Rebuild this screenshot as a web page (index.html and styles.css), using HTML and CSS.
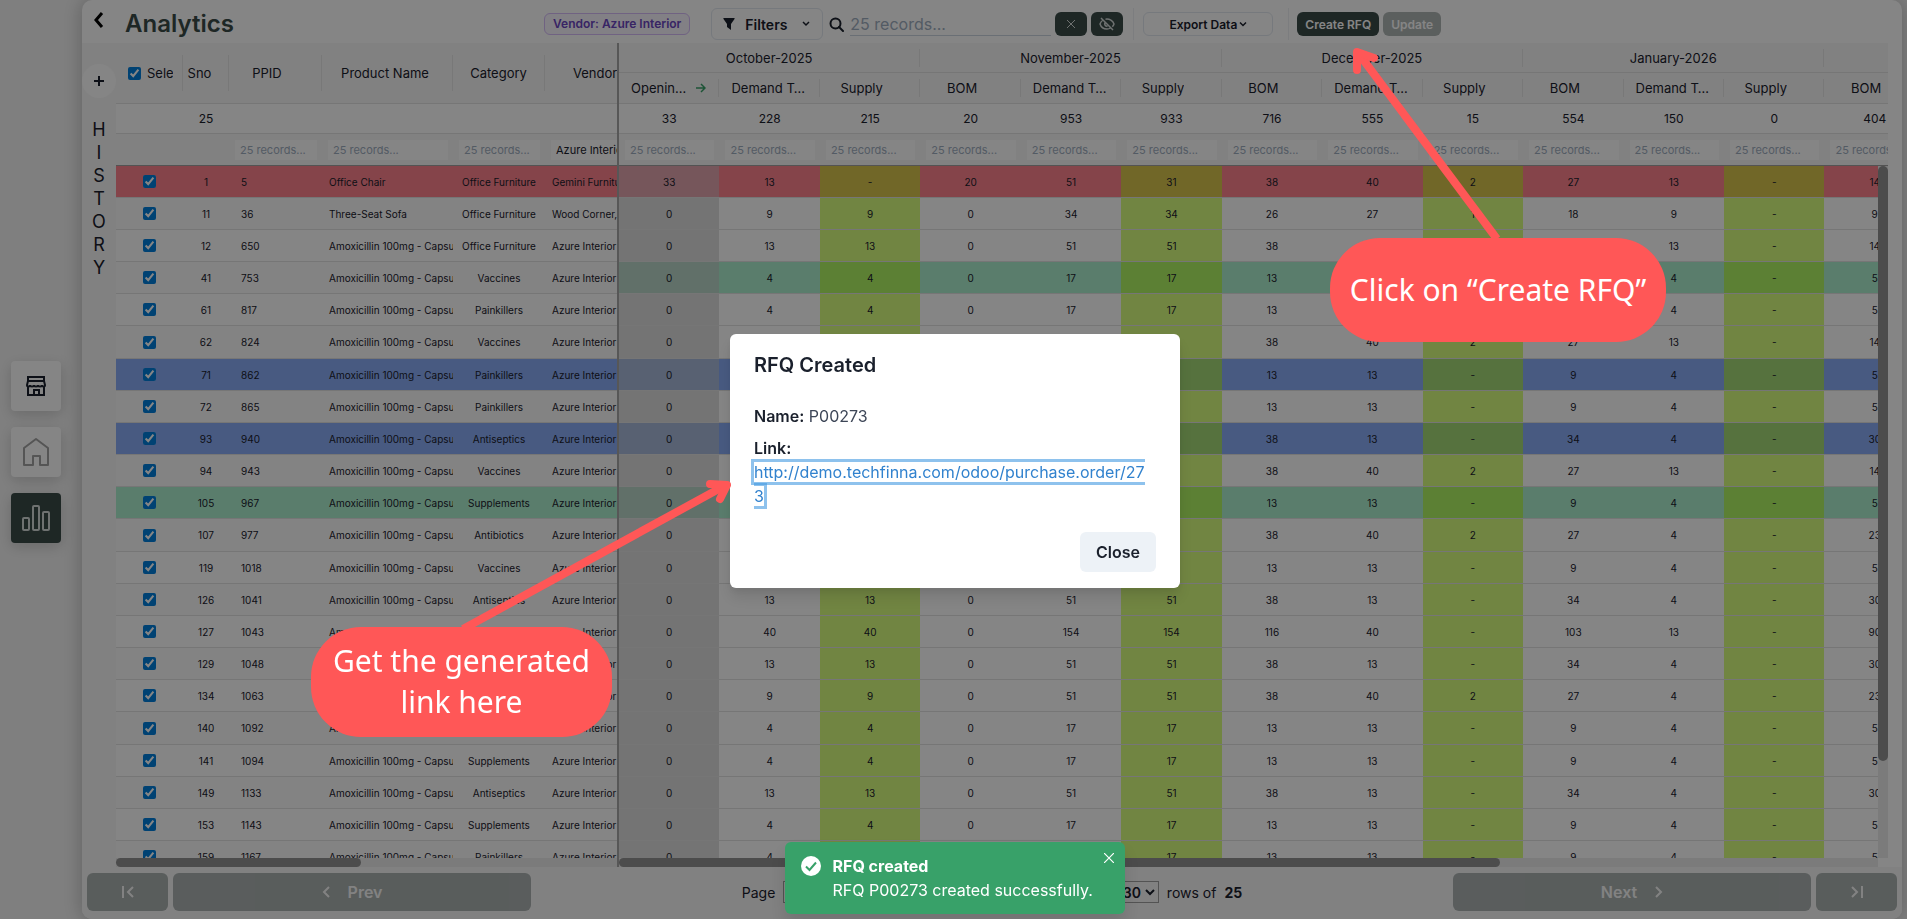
FILE: index.html
```html
<!DOCTYPE html>
<html lang="en">
  <head>
    <meta charset="utf-8" />
    <title>Analytics</title>
    <link rel="stylesheet" href="styles.css">
    <script type="text/javascript" src="main.js" defer></script>
  </head>
  <body>
    <div class="app">
      <nav class="sidebar">
        <a class="tile" href="#store" aria-label="Store">
          <svg width="24" height="24" viewBox="0 0 24 24" fill="none" stroke="#1a202c" stroke-width="2">
            <path d="M4 3h16v4H4zM4 7l-1 4c0 2 3 2 3 0 0 2 4 2 4 0 0 2 4 2 4 0 0 2 4 2 4 0 0 2 3 2 3 0l-1-4M4 12v9h16v-9M10 21v-5h5v5" />
          </svg>
        </a>
        <a class="tile" href="#home" aria-label="Home">
          <svg width="28" height="32" viewBox="0 0 28 32" fill="none" stroke="#a3a3a3" stroke-width="2">
            <path d="M2 12 14 3l12 9v17h-8v-9h-7v9H2z" stroke-linejoin="round" />
          </svg>
        </a>
        <a class="tile active" href="#analytics" aria-label="Analytics">
          <svg width="30" height="30" viewBox="0 0 30 30" fill="none" stroke="#d5dad9" stroke-width="2">
            <rect x="2" y="15" width="6" height="12" rx="1" />
            <rect x="12" y="3" width="6" height="24" rx="1" />
            <rect x="22" y="9" width="6" height="18" rx="1" />
          </svg>
        </a>
      </nav>

      <main class="card">
        <header class="topbar">
          <button class="back" aria-label="Back">
            <svg width="12" height="16" viewBox="0 0 12 16" fill="none" stroke="#000" stroke-width="3">
              <path d="M9 1 3 8l6 7" />
            </svg>
          </button>
          <h1>Analytics</h1>
          <span class="tag">Vendor: Azure Interior</span>
          <button class="filters">
            <svg width="12" height="14" viewBox="0 0 12 14" fill="#1a202c">
              <path d="M1 1h10c.6 0 .8.6.5 1L8 7v6L4 10V7L.5 2C.2 1.6.4 1 1 1z" />
            </svg>
            Filters
            <svg width="10" height="10" viewBox="0 0 10 10" fill="none" stroke="#1a202c" stroke-width="1.5">
              <path d="M2 3l3 3 3-3" />
            </svg>
          </button>
          <label class="search">
            <svg width="15" height="15" viewBox="0 0 15 15" fill="none" stroke="#1a202c" stroke-width="2">
              <circle cx="6.5" cy="6.5" r="5" />
              <path d="M10 10l4 4" stroke-linecap="round" />
            </svg>
            <input type="text" placeholder="25 records..." aria-label="Search records" />
          </label>
          <div class="icon-buttons">
            <button class="dark icon" aria-label="Clear search">
              <svg width="10" height="10" viewBox="0 0 10 10" stroke="#d5dad9">
                <path d="M1 1l8 8M9 1L1 9" />
              </svg>
            </button>
            <button class="dark icon" aria-label="Hide columns">
              <svg width="16" height="14" viewBox="0 0 16 14" fill="none" stroke="#d5dad9" stroke-width="1.5">
                <path d="M2 1l12 12M4 3C2.5 4 1.5 5.5 1 7c1 3 4 5 7 5 1.3 0 2.5-.3 3.5-1M6.5 2.2C10.5 1.5 14 4 15 7c-.3 1-.9 2-1.7 2.7M6 5.5c-1 2 .5 4 2.5 3.8" />
              </svg>
            </button>
          </div>
          <div class="export">
            <button class="outline">
              Export Data
              <svg width="8" height="8" viewBox="0 0 8 8" fill="none" stroke="#1a202c" stroke-width="1.5">
                <path d="M1 2.5l3 3 3-3" />
              </svg>
            </button>
          </div>
          <div class="actions">
            <button class="dark">Create RFQ</button>
            <button class="dark" disabled>Update</button>
          </div>
        </header>

        <div class="content">
          <div class="history">
            <button class="add" aria-label="Add">
              <svg width="12" height="12" viewBox="0 0 12 12" stroke="#1a202c" stroke-width="2">
                <path d="M6 1v10M1 6h10" />
              </svg>
            </button>
            <div class="letters">
              <span>H</span><span>I</span><span>S</span><span>T</span><span>O</span><span>R</span><span>Y</span>
            </div>
          </div>

          <div class="pane pinned">
            <div class="clip">
              <table>
                <colgroup>
                  <col class="c-check" /><col class="c-sno" /><col class="c-ppid" />
                  <col class="c-name" /><col class="c-cat" /><col class="c-vendor" />
                </colgroup>
                <thead>
                  <tr class="titles">
                    <th>
                      <div class="label tall left">
                        <input type="checkbox" id="all" checked />
                        <label for="all">Select</label>
                      </div>
                    </th>
                    <th><div class="label tall sno">Sno</div></th>
                    <th><div class="label tall near">PPID</div></th>
                    <th><div class="label tall name">Product Name</div></th>
                    <th><div class="label tall">Category</div></th>
                    <th><div class="label tall">Vendor</div></th>
                  </tr>
                  <tr class="totals">
                    <td></td><td>25</td><td></td><td></td><td></td><td></td>
                  </tr>
                  <tr class="search-row">
                    <td></td>
                    <td></td>
                    <td><input type="text" placeholder="25 records..." aria-label="Filter PPID" /></td>
                    <td><input type="text" placeholder="25 records..." aria-label="Filter product name" /></td>
                    <td><input type="text" placeholder="25 records..." aria-label="Filter category" /></td>
                    <td><input type="text" value="Azure Interior" aria-label="Filter vendor" /></td>
                  </tr>
                </thead>
                <tbody id="products"></tbody>
              </table>
            </div>
            <div class="hscroll"><div class="thumb half"></div></div>
          </div>

          <div class="pane months">
            <div class="clip">
              <table>
                <thead>
                  <tr class="groups">
                    <th colspan="3"><div class="label">October-2025</div></th>
                    <th colspan="3"><div class="label">November-2025</div></th>
                    <th colspan="3"><div class="label">December-2025</div></th>
                    <th colspan="3"><div class="label">January-2026</div></th>
                    <th></th>
                  </tr>
                  <tr class="columns" id="columns"></tr>
                  <tr class="totals" id="totals"></tr>
                  <tr class="search-row" id="searches"></tr>
                </thead>
                <tbody id="figures"></tbody>
              </table>
              <div class="vscroll"><div class="thumb"></div></div>
            </div>
            <div class="hscroll"><div class="thumb most"></div></div>
          </div>
        </div>

        <footer class="pager">
          <button class="page-end" disabled aria-label="First page">
            <svg width="14" height="14" viewBox="0 0 14 14" fill="none" stroke="#fff" stroke-width="2">
              <path d="M2 1v12M12 2L7 7l5 5" />
            </svg>
          </button>
          <button class="page-step" disabled>
            <svg width="8" height="14" viewBox="0 0 8 14" fill="none" stroke="#fff" stroke-width="2">
              <path d="M7 2L2 7l5 5" />
            </svg>
            Prev
          </button>
          <div class="page-info">
            <label for="page">Page</label>
            <input type="text" id="page" value="1" />
            <span>of</span>
            <b>1</b>
            <label for="size">Show</label>
            <select id="size">
              <option>30</option>
            </select>
            <span>rows of</span>
            <b>25</b>
          </div>
          <button class="page-step" disabled>
            Next
            <svg width="8" height="14" viewBox="0 0 8 14" fill="none" stroke="#fff" stroke-width="2">
              <path d="M1 2l5 5-5 5" />
            </svg>
          </button>
          <button class="page-end" disabled aria-label="Last page">
            <svg width="14" height="14" viewBox="0 0 14 14" fill="none" stroke="#fff" stroke-width="2">
              <path d="M12 1v12M2 2l5 5-5 5" />
            </svg>
          </button>
        </footer>
      </main>
    </div>

    <div class="overlay">
      <section class="modal" role="dialog" aria-labelledby="modal-title">
        <h2 id="modal-title">RFQ Created</h2>
        <div class="modal-body">
          <p><b>Name:</b> <span>P00273</span></p>
          <p><b>Link:</b><br /><a href="http://demo.techfinna.com/odoo/purchase.order/273">http://demo.techfinna.com/odoo/purchase.order/273</a></p>
        </div>
        <div class="modal-footer">
          <button>Close</button>
        </div>
      </section>
    </div>

    <div class="toast" role="status">
      <svg width="20" height="20" viewBox="0 0 20 20">
        <circle cx="10" cy="10" r="10" fill="#fff" />
        <path d="M5 10.5l3.5 3.5L15 6.5" fill="none" stroke="#38a169" stroke-width="2" />
      </svg>
      <div>
        <b>RFQ created</b>
        <p>RFQ P00273 created successfully.</p>
      </div>
      <button aria-label="Dismiss">
        <svg width="10" height="10" viewBox="0 0 10 10" stroke="#fff" stroke-width="1.2">
          <path d="M0 0l10 10M10 0L0 10" />
        </svg>
      </button>
    </div>

    <svg class="arrows" fill="none" stroke="#ff5757" stroke-width="8">
      <path d="M1497 239L1359 54" />
      <path d="M1357 70V52l17 6" stroke-linecap="round" stroke-linejoin="round" />
      <path d="M463 629L726 485" />
      <path d="M710 484l17 1-7 14" stroke-linecap="round" stroke-linejoin="round" />
    </svg>
    <div class="callout create">Click on “Create RFQ”</div>
    <div class="callout link">Get the generated link here</div>
  </body>
</html>
```
FILE: styles.css
```css
* {
  box-sizing: border-box;
}
body {
  margin: 0;
  font-family: Inter, "Liberation Sans", sans-serif;
  font-size: 14px;
  color: #1a202c;
  background: #f4f4f4;
  overflow: hidden;
}
button,
input,
select {
  font: inherit;
  color: inherit;
}
button {
  display: flex;
  align-items: center;
  justify-content: center;
  border: 0;
  background: none;
  padding: 0;
}
h1,
h2,
p {
  margin: 0;
}

.app {
  display: flex;
  height: 100vh;
}

/* left navigation */
.sidebar {
  width: 82px;
  flex: none;
  display: flex;
  flex-direction: column;
  justify-content: center;
  gap: 16px;
  padding: 0 0 16px 11px;
}
.tile {
  display: flex;
  align-items: center;
  justify-content: center;
  width: 50px;
  height: 50px;
  border-radius: 4px;
  background: #fff;
  box-shadow: 0 4px 14px rgba(0, 0, 0, 0.16);
}
.tile.active {
  background: #3a4b48;
}

.card {
  flex: 1;
  min-width: 0;
  margin-right: 5px;
  display: flex;
  flex-direction: column;
  background: #fff;
  border-radius: 10px;
  box-shadow: 0 0 20px rgba(0, 0, 0, 0.25);
}

/* top bar */
.topbar {
  display: flex;
  align-items: center;
  height: 43px;
  padding-top: 5px;
}
.back {
  width: 12px;
  margin: 0 20px 8px 11px;
}
h1 {
  width: 419px;
  font-size: 24px;
  font-weight: 600;
  line-height: 32px;
  color: #3a4b48;
}
.tag {
  padding: 0 8px;
  margin-right: 21px;
  line-height: 20px;
  font-size: 12px;
  font-weight: 600;
  color: #6b46c1;
  background: #faf5ff;
  border: 1px solid #d6bcfa;
  border-radius: 6px;
  white-space: nowrap;
}
.filters {
  width: 112px;
  height: 32px;
  gap: 10px;
  font-weight: 600;
  border: 1px solid #e2e8f0;
  border-radius: 6px;
}
.filters svg:last-child {
  margin-left: 4px;
}
.search {
  display: flex;
  align-items: center;
  gap: 6px;
  margin-left: 6px;
}
.search input {
  width: 201px;
  height: 24px;
  padding: 0;
  font-size: 16px;
  border: 0;
  border-bottom: 1px solid #cbd5e0;
  background: none;
}
.search input::placeholder {
  color: #a0aec0;
}
.icon-buttons,
.actions {
  display: flex;
  gap: 4px;
}
.icon-buttons {
  margin: 0 10px 0 4px;
}
.dark {
  height: 24px;
  padding: 0 8px;
  font-size: 12px;
  font-weight: 600;
  color: #fff;
  background: #3a4b48;
  border-radius: 6px;
  white-space: nowrap;
}
.dark:disabled {
  opacity: 0.4;
}
.icon {
  width: 32px;
}
.export,
.actions {
  height: 32px;
  align-items: center;
  border-left: 1px solid #edf0f3;
}
.export {
  display: flex;
  padding: 0 15px 0 9px;
}
.actions {
  padding-left: 8px;
}
.outline {
  width: 130px;
  height: 24px;
  gap: 2px;
  font-size: 12px;
  font-weight: 600;
  border: 1px solid #e2e8f0;
  border-radius: 6px;
}

/* grid */
.content {
  flex: 1;
  min-height: 0;
  display: flex;
  padding-right: 14px;
}
.history {
  width: 34px;
  flex: none;
  padding-top: 21px;
  background: #f8f8f8;
}
.add {
  width: 34px;
  height: 34px;
  border-radius: 50%;
  background: #fff;
}
.letters {
  display: flex;
  flex-direction: column;
  align-items: center;
  padding-top: 20px;
  font-size: 18px;
  line-height: 23px;
}
.pane {
  display: flex;
  flex-direction: column;
  min-width: 0;
}
.pinned {
  width: 503px;
  flex: none;
  border-right: 2px solid #a8a8a8;
}
.months {
  flex: 1;
}
.clip {
  flex: 1;
  min-height: 0;
  overflow: hidden;
  position: relative;
}
table {
  table-layout: fixed;
  border-spacing: 0;
  font-size: 10px;
}
.pinned table {
  width: 530px;
}
.months table {
  width: 1306px;
}
.c-check {
  width: 67px;
}
.c-sno {
  width: 46px;
}
.c-ppid {
  width: 93px;
}
.c-name {
  width: 131px;
}
.c-cat {
  width: 92px;
}
th,
td {
  padding: 0;
  text-align: center;
  overflow: hidden;
  white-space: nowrap;
}
th {
  font-size: 13px;
  font-weight: 400;
  background: #f8f8f8;
  border-bottom: 1px solid #e2e2e2;
}
.titles {
  height: 61px;
}
.groups {
  height: 30px;
}
.columns {
  height: 31px;
}
.label {
  display: flex;
  align-items: center;
  justify-content: center;
  height: 18px;
  padding: 0 12px;
  border-right: 1px solid #e6e6e6;
}
.label span {
  overflow: hidden;
  text-overflow: ellipsis;
}
.tall {
  height: 36px;
}
.left {
  gap: 6px;
  justify-content: flex-start;
  padding-right: 9px;
}
.left input {
  flex: none;
  width: 13px;
  height: 13px;
  margin: 0;
}
.left label {
  overflow: hidden;
}
.near {
  padding: 0 16px 0 0;
}
.sno {
  padding: 0 12px 0 0;
}
.name {
  padding: 0 16px 0 12px;
}
.arrow {
  flex: none;
  margin-left: 8px;
}
.totals td {
  height: 30px;
  font-size: 12px;
  border-bottom: 1px solid #e2e2e2;
}
.search-row td {
  height: 32px;
  padding: 0 5px 0 6px;
  background: #f8f8f8;
  border-bottom: 1px solid #a0a0a0;
}
.search-row input {
  display: block;
  width: 100%;
  height: 20px;
  padding: 0 5px;
  font-size: 11px;
  background: #fff;
  border: 0;
}
.search-row input::placeholder {
  color: #a0aec0;
}
tbody tr {
  height: 32px;
}
tbody tr:nth-child(6n) {
  height: 33px;
}
tbody td {
  border-bottom: 1px solid #e2e2e2;
}
tbody input {
  display: block;
  width: 13px;
  height: 13px;
  margin: 0 auto;
}
input[type="checkbox"] {
  accent-color: #007fdd;
}
.start {
  text-align: left;
  padding-left: 12px;
}
.start + .start,
.vendor {
  text-align: left;
  padding-left: 7px;
}
#products tr:nth-child(even) {
  background: #fcfcfc;
}
#figures td:first-child {
  background: #dfdfdf;
}
#figures td:nth-child(3n) {
  background: #d9ff7f;
}
#products .red,
.red {
  background: #ff838e;
}
#figures .red td:first-child {
  background: #e3a5af;
}
#figures .red td:nth-child(3n) {
  background: #d9c64d;
}
#products .green,
.green {
  background: #adf0d0;
}
#figures .green td:first-child {
  background: #bbd7ca;
}
#figures .green td:nth-child(3n) {
  background: #b1f664;
}
#products .blue,
.blue {
  background: #8aadf8;
}
#figures .blue td:first-child {
  background: #a9bbdb;
}
#figures .blue td:nth-child(3n) {
  background: #a5db77;
}

/* scroll bars */
.vscroll {
  position: absolute;
  top: 123px;
  right: 0;
  bottom: 0;
  width: 10px;
  background: #ececec;
}
.thumb {
  background: #929292;
  border-radius: 5px;
}
.vscroll .thumb {
  height: 86%;
}
.hscroll {
  height: 9px;
  background: #ececec;
}
.months .hscroll {
  margin-right: 10px;
}
.hscroll .thumb {
  height: 9px;
}
.half {
  width: 49%;
}
.most {
  width: 70%;
}

/* pager */
.pager {
  display: flex;
  gap: 5px;
  height: 52px;
  padding: 6px 5px 8px;
  background: #f8f8f8;
  border-radius: 0 0 10px 10px;
}
.pager button {
  height: 38px;
  gap: 18px;
  font-size: 16px;
  font-weight: 600;
  color: #fff;
  background: #3a4b48;
  border-radius: 6px;
  opacity: 0.4;
}
.page-end {
  flex: 0 0 81px;
}
.page-step {
  flex: 0 1 358px;
}
.page-info {
  flex: 1;
  display: flex;
  align-items: center;
  justify-content: center;
  gap: 8px;
}
.page-info input {
  width: 246px;
  height: 22px;
  border: 1px solid #a0a0a0;
}
.page-info select {
  height: 22px;
  padding: 0;
  font-weight: 600;
  background: none;
  border: 1px solid #a0a0a0;
}

/* dialog */
.overlay {
  position: fixed;
  inset: 0;
  display: flex;
  align-items: center;
  justify-content: center;
  padding: 2px 0 0 3px;
  background: rgba(0, 0, 0, 0.48);
}
.modal {
  width: 450px;
  font-size: 16px;
  line-height: 24px;
  background: #fff;
  border-radius: 6px;
  box-shadow: 0 10px 15px rgba(0, 0, 0, 0.1), 0 4px 6px rgba(0, 0, 0, 0.05);
}
h2 {
  padding: 16px 24px;
  font-size: 20px;
  font-weight: 600;
  line-height: 30px;
}
.modal-body {
  padding: 8px 32px 8px 24px;
}
.modal-body p + p {
  margin-top: 8px;
}
.modal-body b {
  font-weight: 600;
}
.modal-body span {
  color: #3d4657;
}
.modal-body a {
  color: #3182ce;
  text-decoration: none;
  word-break: break-all;
  box-shadow: 0 0 0 3px rgba(66, 153, 225, 0.6);
}
.modal-footer {
  display: flex;
  justify-content: flex-end;
  padding: 16px 24px;
}
.modal-footer button {
  height: 40px;
  padding: 0 16px;
  font-weight: 600;
  background: #edf2f7;
  border-radius: 6px;
}

.toast {
  position: fixed;
  left: 50%;
  bottom: 5px;
  margin-left: -169px;
  display: flex;
  gap: 12px;
  padding: 12px 32px 12px 16px;
  font-size: 16px;
  line-height: 24px;
  color: #fff;
  background: #38a169;
  border-radius: 6px;
  white-space: nowrap;
  box-shadow: 0 10px 15px rgba(0, 0, 0, 0.1);
}
.toast > svg {
  margin-top: 2px;
}
.toast button {
  position: absolute;
  top: 11px;
  right: 11px;
}

/* callouts */
.arrows {
  position: fixed;
  inset: 0;
  width: 100%;
  height: 100%;
}
.callout {
  position: fixed;
  display: flex;
  align-items: center;
  justify-content: center;
  padding: 0 16px 2px;
  font-family: "Noto Sans", sans-serif;
  font-size: 30px;
  line-height: 41px;
  text-align: center;
  color: #fff;
  background: #ff5757;
  border-radius: 50px;
}
.create {
  left: 1330px;
  top: 238px;
  width: 336px;
  height: 104px;
}
.link {
  left: 311px;
  top: 627px;
  width: 301px;
  height: 110px;
}
```
FILE: main.js
```js
const capsule = "Amoxicillin 100mg - Capsule";
const azure = "Azure Interior";

// colour, sno, ppid, name, category, vendor, figures
const rows = [
  ["red", 1, 5, "Office Chair", "Office Furniture", "Gemini Furniture", "33 13 - 20 51 31 38 40 2 27 13 - 14"],
  ["", 11, 36, "Three-Seat Sofa", "Office Furniture", "Wood Corner, Azure", "0 9 9 0 34 34 26 27 1 18 9 - 9"],
  ["", 12, 650, capsule, "Office Furniture", azure, "0 13 13 0 51 51 38 40 2 27 13 - 14"],
  ["green", 41, 753, capsule, "Vaccines", azure, "0 4 4 0 17 17 13 13 - 9 4 - 5"],
  ["", 61, 817, capsule, "Painkillers", azure, "0 4 4 0 17 17 13 13 - 9 4 - 5"],
  ["", 62, 824, capsule, "Vaccines", azure, "0 13 13 0 51 51 38 40 2 27 13 - 14"],
  ["blue", 71, 862, capsule, "Painkillers", azure, "0 4 4 0 17 17 13 13 - 9 4 - 5"],
  ["", 72, 865, capsule, "Painkillers", azure, "0 4 4 0 17 17 13 13 - 9 4 - 5"],
  ["blue", 93, 940, capsule, "Antiseptics", azure, "0 13 13 0 51 51 38 13 - 34 4 - 30"],
  ["", 94, 943, capsule, "Vaccines", azure, "0 13 13 0 51 51 38 40 2 27 13 - 14"],
  ["green", 105, 967, capsule, "Supplements", azure, "0 4 4 0 17 17 13 13 - 9 4 - 5"],
  ["", 107, 977, capsule, "Antibiotics", azure, "0 9 9 0 51 51 38 40 2 27 4 - 23"],
  ["", 119, 1018, capsule, "Vaccines", azure, "0 4 4 0 17 17 13 13 - 9 4 - 5"],
  ["", 126, 1041, capsule, "Antiseptics", azure, "0 13 13 0 51 51 38 13 - 34 4 - 30"],
  ["", 127, 1043, capsule, "Antiseptics", azure, "0 40 40 0 154 154 116 40 - 103 13 - 90"],
  ["", 129, 1048, capsule, "Antiseptics", azure, "0 13 13 0 51 51 38 13 - 34 4 - 30"],
  ["", 134, 1063, capsule, "Antibiotics", azure, "0 9 9 0 51 51 38 40 2 27 4 - 23"],
  ["", 140, 1092, capsule, "Vaccines", azure, "0 4 4 0 17 17 13 13 - 9 4 - 5"],
  ["", 141, 1094, capsule, "Supplements", azure, "0 4 4 0 17 17 13 13 - 9 4 - 5"],
  ["", 149, 1133, capsule, "Antiseptics", azure, "0 13 13 0 51 51 38 13 - 34 4 - 30"],
  ["", 153, 1143, capsule, "Supplements", azure, "0 4 4 0 17 17 13 13 - 9 4 - 5"],
  ["", 159, 1167, capsule, "Painkillers", azure, "0 4 4 0 17 17 13 13 - 9 4 - 5"],
];

const totals = "33 228 215 20 953 933 716 555 15 554 150 0 404".split(" ");
const names = ["BOM", "Demand Total", "Supply"];
const arrow =
  '<svg class="arrow" width="10" height="10" viewBox="0 0 10 10" fill="none" stroke="#38a169" stroke-width="1.5"><path d="M0 5h9M5 1l4 4-4 4"/></svg>';

const fill = (id, html) => (document.getElementById(id).innerHTML = html);
const cells = (list) => list.map((v) => `<td>${v}</td>`).join("");

fill(
  "columns",
  totals
    .map((_, i) => {
      if (i === 0) return `<th><div class="label"><span>Opening Stock</span>${arrow}</div></th>`;
      const name = names[i % 3];
      const near = name === "Demand Total" ? "" : " near";
      return `<th><div class="label${near}"><span>${name}</span></div></th>`;
    })
    .join("")
);
fill("totals", cells(totals));
fill(
  "searches",
  cells(totals.map((_, i) => `<input type="text" placeholder="25 records..." aria-label="Filter column ${i + 1}">`))
);

fill(
  "products",
  rows
    .map(
      ([color, sno, ppid, name, category, vendor]) => `<tr class="${color}">
        <td><input type="checkbox" checked aria-label="Select ${ppid}"></td>
        <td>${sno}</td>
        <td class="start">${ppid}</td>
        <td class="start">${name}</td>
        <td>${category}</td>
        <td class="vendor">${vendor}</td>
      </tr>`
    )
    .join("")
);
fill("figures", rows.map((r) => `<tr class="${r[0]}">${cells(r[6].split(" "))}</tr>`).join(""));
```
